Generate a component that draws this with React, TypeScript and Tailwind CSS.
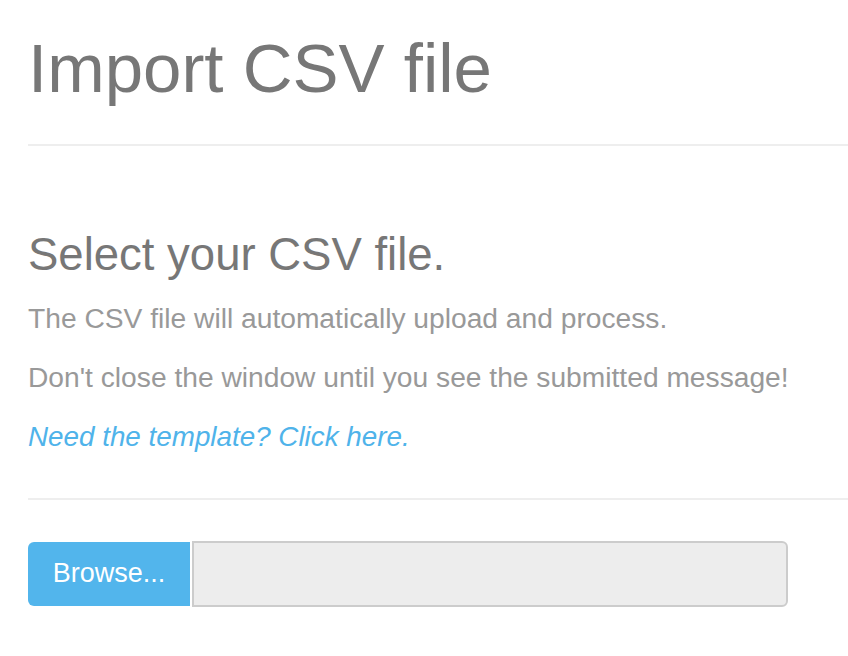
import React from "react";

const App = () => {
    return (
        <div className="min-h-[656px] bg-white pl-[28px] pt-[34px] font-['Liberation_Sans',Arial,sans-serif]">
            <h1 className="text-[69px] leading-none text-[#777] font-normal">Import CSV file</h1>
            <div className="mt-[41px] h-[2px] bg-[#eee]" />

            <h3 className="mt-[86px] text-[45.5px] leading-none text-[#777] font-normal">Select your CSV file.</h3>
            <div className="mt-[11px] text-[28.2px] leading-[59px] text-[#999]">
                <p>The CSV file will automatically upload and process.</p>
                <p>Don't close the window until you see the submitted message!</p>
                <p>
                    <a href="#" className="italic text-[#4fb3ea] text-[27.8px]">Need the template? Click here.</a>
                </p>
            </div>
            <div className="mt-[32px] h-[2px] bg-[#eee]" />

            <div className="mt-[41px] flex items-center">
                <button className="w-[162px] h-[64px] rounded-l-[6px] bg-[#52b5ec] text-white text-[27px]">
                    Browse...
                </button>
                <div className="ml-[2px] w-[596px] h-[66px] border-2 border-[#ccc] bg-[#ededed] rounded-r-[6px]" />
            </div>
        </div>
    );
};

export default App;
